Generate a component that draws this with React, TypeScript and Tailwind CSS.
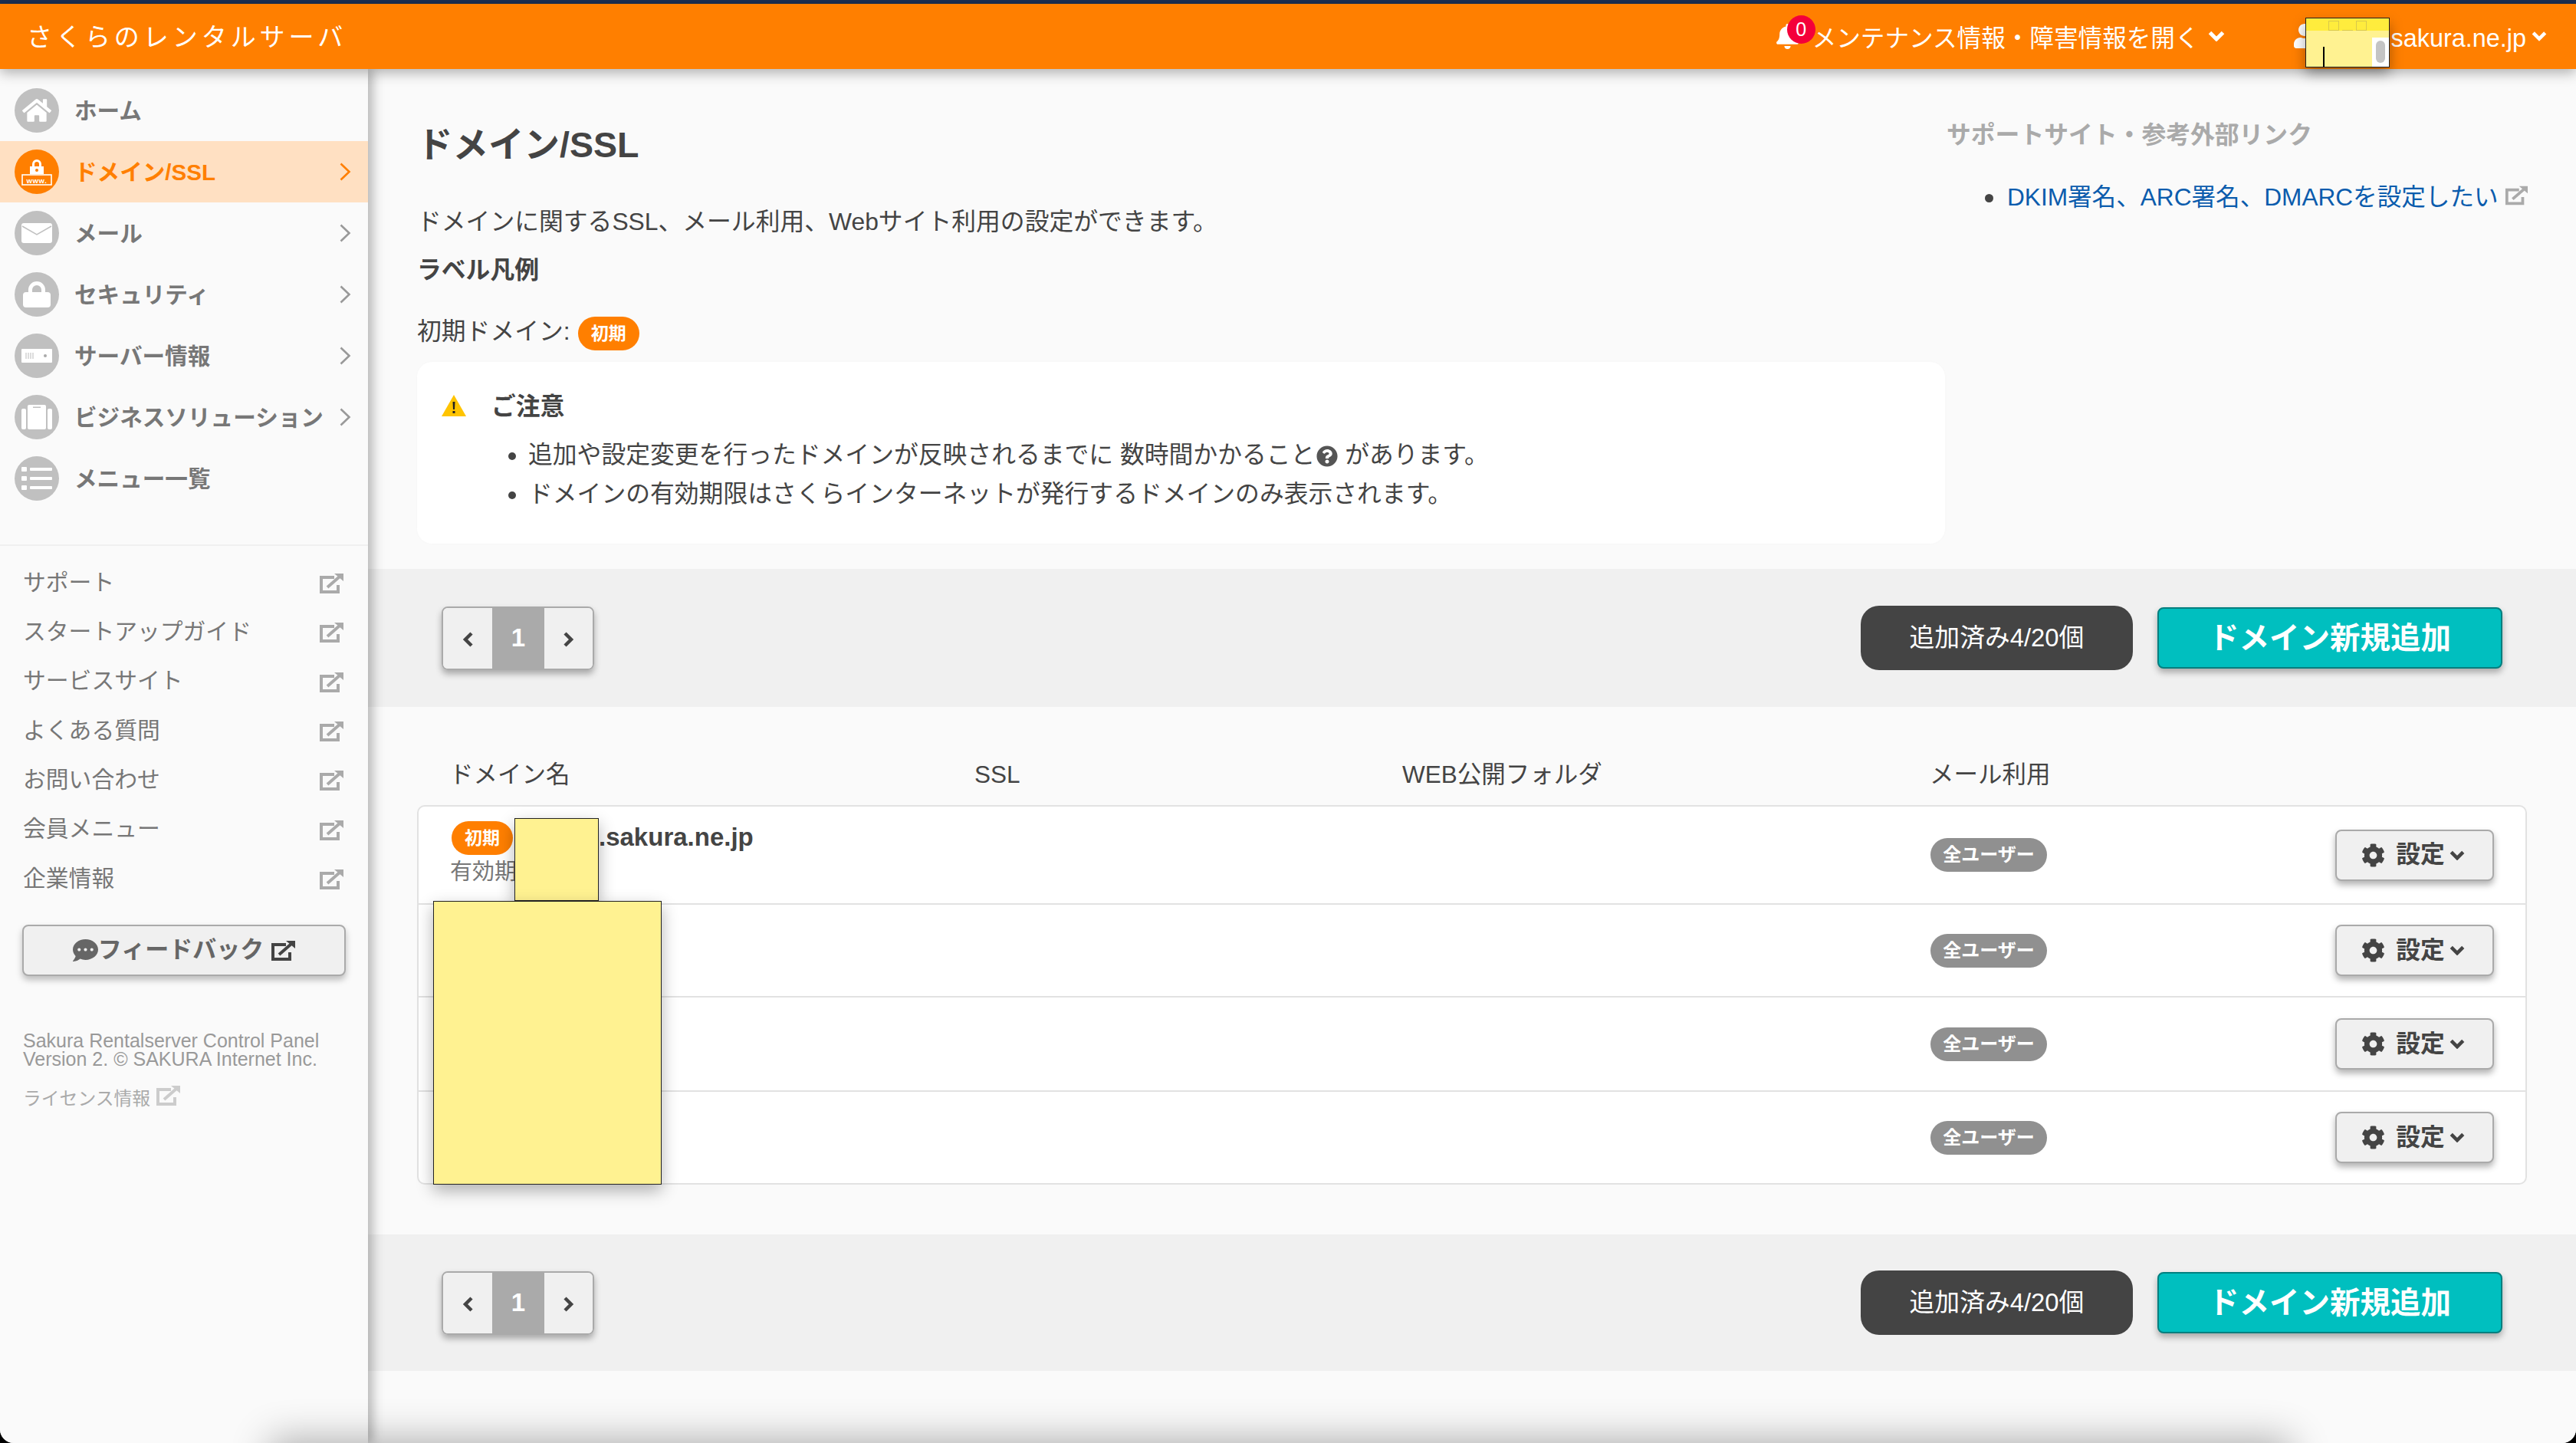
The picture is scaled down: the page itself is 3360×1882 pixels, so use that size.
import { FaBell, FaCog, FaCommentDots, FaHome, FaQuestionCircle, FaUser } from "react-icons/fa";
import type { ReactNode } from "react";

function ExternalIcon({ className }: { className: string }) {
  return (
    <svg viewBox="0 0 32 28" className={className} fill="none" stroke="currentColor">
      <path d="M20 6H3v19h22v-9" strokeWidth="4" />
      <path d="M11 19 27 5" strokeWidth="4" />
      <path d="M20 1h12v10z" fill="currentColor" stroke="none" />
    </svg>
  );
}

function ChevronDown({ className }: { className: string }) {
  return (
    <svg viewBox="0 0 22 14" className={className} fill="none" stroke="currentColor" strokeWidth="5">
      <path d="M2.5 2.5 11 11l8.5-8.5" />
    </svg>
  );
}

function ChevronThin({ className }: { className: string }) {
  return (
    <svg viewBox="0 0 15 24" className={className} fill="none" stroke="currentColor" strokeWidth="2.6">
      <path d="m1.5 1.5 11 10.5-11 10.5" />
    </svg>
  );
}

function DomainIcon() {
  return (
    <svg viewBox="0 0 40 36" className="w-[40px] h-[36px]" fill="white">
      <path d="M14 12V8a6 6 0 0 1 12 0v4h-3V8a3 3 0 0 0-6 0v4z" />
      <rect x="11" y="11" width="18" height="10" />
      <circle cx="20" cy="16" r="2" fill="#ff7f00" />
      <rect x="1" y="22" width="38" height="13" fill="none" stroke="white" strokeWidth="1.6" />
      <text x="20" y="32.5" textAnchor="middle" fontSize="9.5" fontWeight="700" letterSpacing="0.6" fontFamily="Liberation Sans">www.</text>
    </svg>
  );
}

function MailIcon() {
  return (
    <svg viewBox="0 0 40 26" className="w-[40px] h-[26px]">
      <rect width="40" height="26" rx="3" fill="white" />
      <path d="M1 4 20 15 39 4" fill="none" stroke="#c0c0c0" strokeWidth="1.5" />
    </svg>
  );
}

function LockIcon() {
  return (
    <svg viewBox="0 0 36 34" className="w-[36px] h-[34px]" fill="white">
      <path d="M7 17V11a11 11 0 0 1 22 0v6h-5v-6a6 6 0 0 0-12 0v6z" />
      <rect y="14" width="36" height="20" rx="4" />
    </svg>
  );
}

function ServerIcon() {
  return (
    <svg viewBox="0 0 40 18" className="w-[40px] h-[18px]">
      <rect width="40" height="18" rx="1" fill="white" />
      <path d="M6 5v8M9 5v8M12 5v8M15 5v8" stroke="#bbb" strokeWidth="1" />
      <circle cx="31" cy="9" r="2" fill="#aaa" />
    </svg>
  );
}

function CaseIcon() {
  return (
    <svg viewBox="0 0 40 32" className="w-[40px] h-[32px]" fill="white">
      <rect y="5" width="6" height="27" rx="2" />
      <rect x="8" y="0" width="24" height="32" rx="2" />
      <rect x="34" y="5" width="6" height="27" rx="2" />
      <rect x="15" y="2.5" width="10" height="1.5" fill="#c0c0c0" />
    </svg>
  );
}

function ListIcon() {
  return (
    <svg viewBox="0 0 40 30" className="w-[40px] h-[30px]" fill="white">
      <rect y="0" width="7" height="6" rx="1" />
      <rect y="12" width="7" height="6" rx="1" />
      <rect y="24" width="7" height="6" rx="1" />
      <rect x="11" y="1" width="29" height="4" rx="1" />
      <rect x="11" y="13" width="29" height="4" rx="1" />
      <rect x="11" y="25" width="29" height="4" rx="1" />
    </svg>
  );
}

const navItems: { label: string; icon: ReactNode; arrow: boolean; active?: boolean }[] = [
  { label: "ホーム", icon: <FaHome className="size-[38px] text-white" />, arrow: false },
  { label: "ドメイン/SSL", icon: <DomainIcon />, arrow: true, active: true },
  { label: "メール", icon: <MailIcon />, arrow: true },
  { label: "セキュリティ", icon: <LockIcon />, arrow: true },
  { label: "サーバー情報", icon: <ServerIcon />, arrow: true },
  { label: "ビジネスソリューション", icon: <CaseIcon />, arrow: true },
  { label: "メニュー一覧", icon: <ListIcon />, arrow: false },
];

const linkItems = ["サポート", "スタートアップガイド", "サービスサイト", "よくある質問", "お問い合わせ", "会員メニュー", "企業情報"];

function Sidebar() {
  return (
    <aside className="relative z-10 w-[480px] shrink-0 bg-[#fafafa] shadow-[6px_0_14px_rgba(0,0,0,0.28)] pt-[14px]">
      {navItems.map((item) => (
        <div key={item.label} className={`flex h-[80px] items-center pl-[19px] pr-[22px] ${item.active ? "bg-[#ffe0c2]" : ""}`}>
          <div className={`flex size-[58px] shrink-0 items-center justify-center rounded-full ${item.active ? "bg-[#ff7f00]" : "bg-[#c0c0c0]"}`}>{item.icon}</div>
          <span className={`ml-[20px] mt-[3px] flex-1 whitespace-nowrap text-[29.6px] font-bold ${item.active ? "text-[#ff7f00]" : "text-[#777]"}`}>{item.label}</span>
          {item.arrow && <ChevronThin className={`h-[24px] w-[15px] ${item.active ? "text-[#ff7f00]" : "text-[#999]"}`} />}
        </div>
      ))}
      <div className="mt-[46px] border-t-2 border-[#f0f0f0] pt-[17px]">
        {linkItems.map((label) => (
          <div key={label} className="flex h-[64.3px] items-center pl-[30px] pr-[32px] text-[29.8px] text-[#777]">
            <span className="-mt-[2px] flex-1">{label}</span>
            <ExternalIcon className="h-[28px] w-[32px] text-[#aaa]" />
          </div>
        ))}
      </div>
      <button type="button" className="ml-[29px] mt-[27px] flex h-[67px] w-[422px] items-center justify-center rounded-[8px] border-2 border-[#aaa] bg-[#f0f0f0] text-[31px] font-bold text-[#666] shadow-[0_5px_8px_rgba(0,0,0,0.25)]">
        <FaCommentDots className="size-[33px]" />
        <span>フィードバック</span>
        <ExternalIcon className="ml-[9px] h-[28px] w-[32px] text-[#444]" />
      </button>
      <p className="ml-[30px] mt-[72px] text-[25px] leading-[24px] text-[#999]">
        Sakura Rentalserver Control Panel
        <br />
        Version 2. © SAKURA Internet Inc.
      </p>
      <div className="ml-[30px] mt-[22px] flex items-center text-[23.8px] text-[#aaa]">
        <span>ライセンス情報</span>
        <ExternalIcon className="ml-[7px] -mt-[8px] h-[28px] w-[32px] text-[#ccc]" />
      </div>
    </aside>
  );
}

function Toolbar({ height }: { height: string }) {
  return (
    <div className={`flex items-center justify-between bg-[#f0f0f0] pl-[96px] pr-[96px] ${height}`}>
      <div className="flex h-[83px] w-[199px] overflow-hidden rounded-[8px] border-2 border-[#aaa] shadow-[0_5px_8px_rgba(0,0,0,0.3)]">
        <div className="flex w-[64px] items-center justify-center bg-[#f0f0f0] text-[#444]">
          <svg viewBox="0 0 14 20" className="mt-[3px] h-[20px] w-[15px]" fill="none" stroke="currentColor" strokeWidth="4.5"><path d="M11.5 2 3.5 10l8 8" /></svg>
        </div>
        <div className="flex w-[68px] items-center justify-center bg-[#aaa] text-[33px] font-bold text-white">1</div>
        <div className="flex flex-1 items-center justify-center bg-[#f0f0f0] text-[#444]">
          <svg viewBox="0 0 14 20" className="mt-[3px] h-[20px] w-[15px]" fill="none" stroke="currentColor" strokeWidth="4.5"><path d="m2.5 2 8 8-8 8" /></svg>
        </div>
      </div>
      <div className="flex items-center">
        <div className="flex h-[84px] w-[355px] items-center justify-center rounded-[24px] bg-[#444] text-[32.8px] text-white">追加済み4/20個</div>
        <button type="button" className="ml-[32px] h-[80px] w-[450px] rounded-[8px] border-2 border-[#007f7f] bg-[#00bfbf] pt-[2px] text-[39.5px] font-bold text-white shadow-[0_5px_8px_rgba(0,0,0,0.3)]">ドメイン新規追加</button>
      </div>
    </div>
  );
}

function Badge({ children, bg, width }: { children: string; bg: string; width: string }) {
  return <span className={`inline-flex h-[44px] items-center justify-center rounded-full text-[23px] font-bold text-white ${bg} ${width}`}>{children}</span>;
}

function TableRow({ height, first, last }: { height: string; first?: boolean; last?: boolean }) {
  return (
    <div className={`grid grid-cols-[685px_558px_688px_1fr] items-center px-[41px] ${height} ${last ? "" : "border-b-2 border-[#e2e2e2]"}`}>
      <div>
        {first && (
          <>
            <div className="-mt-[2px] flex items-center">
              <Badge bg="bg-[#ff7f00]" width="w-[80px] ml-[2px]">初期</Badge>
              <span className="ml-[112px] -mt-[2px] text-[33px] font-bold leading-[40px] text-[#444]">.sakura.ne.jp</span>
            </div>
            <div className="mt-[2px] text-[29px] leading-[40px] text-[#777]">有効期</div>
          </>
        )}
      </div>
      <div />
      <div />
      <div className="flex items-center justify-between">
        <Badge bg="bg-[#909090]" width="w-[152px] text-[24px]">全ユーザー</Badge>
        <button type="button" className="flex h-[67px] w-[207px] items-center justify-center rounded-[8px] border-2 border-[#aaa] bg-[#f0f0f0] pr-[4px] font-bold text-[#444] shadow-[0_5px_8px_rgba(0,0,0,0.3)]">
          <FaCog className="size-[31px]" />
          <span className="ml-[14px]">設定</span>
          <ChevronDown className="ml-[6px] h-[13px] w-[20px]" />
        </button>
      </div>
    </div>
  );
}

function Main() {
  return (
    <main className="min-w-0 flex-1 bg-[#fafafa]">
      <div className="flex pl-[64px]">
        <div className="w-[1993px] pt-[69px]">
          <h1 className="text-[46.5px] font-bold leading-[60px] text-[#444]">ドメイン/SSL</h1>
          <p className="mt-[48px] leading-[44px]">ドメインに関するSSL、メール利用、Webサイト利用の設定ができます。</p>
          <p className="mt-[19px] font-bold leading-[44px]">ラベル凡例</p>
          <div className="mt-[39px] flex h-[44px] items-center">
            <span className="-mt-[4px]">初期ドメイン:</span>
            <Badge bg="bg-[#ff7f00] ml-[10px]" width="w-[80px]">初期</Badge>
          </div>
          <div className="mb-[33px] mt-[15px] h-[237px] rounded-[20px] bg-white pt-[35px] shadow-[0_0_4px_rgba(0,0,0,0.02)]">
            <div className="flex h-[44px] items-center pl-[32px]">
              <svg viewBox="0 0 32 28" className="h-[28px] w-[32px]">
                <path d="M16 0 32 28H0z" fill="#ffc400" />
                <path d="M14.5 9h3l-.5 10h-2zM14.5 21h3v3h-3z" fill="#222" />
              </svg>
              <span className="ml-[33px] mt-[3px] font-bold">ご注意</span>
            </div>
            <ul className="mt-[17px] list-disc pl-[145px] leading-[51px] marker:text-[#444]">
              <li>
                追加や設定変更を行ったドメインが反映されるまでに 数時間かかること
                <FaQuestionCircle className="ml-[2px] inline size-[28px] align-[-5px] text-[#555]" /> があります。
              </li>
              <li>ドメインの有効期限はさくらインターネットが発行するドメインのみ表示されます。</li>
            </ul>
          </div>
        </div>
        <div className="ml-[2px] flex-1 pt-[64px]">
          <p className="font-bold leading-[44px] text-[#aaa]">サポートサイト・参考外部リンク</p>
          <div className="mt-[38px] flex h-[44px] items-center pl-[50px]">
            <span className="size-[11px] rounded-full bg-[#444]" />
            <span className="ml-[18px] whitespace-nowrap text-[31.6px] text-[#0b5cad]">DKIM署名、ARC署名、DMARCを設定したい</span>
            <ExternalIcon className="ml-[8px] -mt-[6px] h-[28px] w-[30px] text-[#aaa]" />
          </div>
        </div>
      </div>
      <Toolbar height="h-[180px]" />
      <div className="pl-[64px] pt-[66px]">
        <div className="grid w-[2752px] grid-cols-[685px_558px_688px_1fr] pl-[42px] text-[31.5px] leading-[44px]">
          <span>ドメイン名</span>
          <span>SSL</span>
          <span>WEB公開フォルダ</span>
          <span>メール利用</span>
        </div>
        <div className="mt-[18px] h-[495px] w-[2752px] rounded-[10px] border-2 border-[#e2e2e2] bg-white">
          <TableRow height="h-[128px]" first />
          <TableRow height="h-[121px]" />
          <TableRow height="h-[123px]" />
          <TableRow height="h-[119px]" last />
        </div>
      </div>
      <div className="mt-[65px]">
        <Toolbar height="h-[178px]" />
      </div>
    </main>
  );
}

export default function App() {
  return (
    <div className="h-[1882px] w-[3360px] overflow-hidden bg-black">
      <div className="relative flex h-full flex-col overflow-hidden rounded-b-[18px] bg-[#fafafa] text-[31.8px] text-[#444] [font-family:'Liberation_Sans','Noto_Sans_CJK_JP',sans-serif]">
        <div className="h-[5px] bg-[#1b2f52]" />
        <header className="relative z-20 flex h-[85px] shrink-0 items-center bg-[#ff7f00] pl-[35px] pr-[38px] text-white shadow-[0_5px_16px_rgba(0,0,0,0.3)]">
          <span className="mt-[2px] text-[33px] tracking-[0.15em]">さくらのレンタルサーバ</span>
          <div className="ml-auto flex items-center">
            <div className="relative mr-[16px]">
              <FaBell className="size-[33px]" />
              <span className="absolute -top-[11px] left-[16px] flex size-[37px] items-center justify-center rounded-full bg-[#f4003a] text-[25px]">0</span>
            </div>
            <span className="mt-[6px] whitespace-nowrap text-[31.6px]">メンテナンス情報・障害情報を開く</span>
            <ChevronDown className="ml-[11px] h-[14px] w-[22px]" />
            <FaUser className="ml-[88px] size-[32px]" />
            <span className="ml-[97px] mt-[6px] text-[32.4px]">sakura.ne.jp</span>
            <ChevronDown className="ml-[7px] h-[14px] w-[20px]" />
          </div>
        </header>
        <div className="flex min-h-0 flex-1">
          <Sidebar />
          <Main />
        </div>
        {/* masked parts of the capture */}
        <div className="absolute left-[3007px] top-[23px] z-30 h-[65px] w-[110px] overflow-hidden border border-[#222] bg-[#fff291] shadow-[0_8px_16px_rgba(0,0,0,0.35)]">
          <div className="flex h-[16px] justify-center gap-[4px] bg-[#ffec3d] pt-[3px]">
            <span className="h-[13px] w-[14px] border border-[#d9c84a]" />
            <span className="h-[13px] w-[14px] border-b border-[#d9c84a]" />
            <span className="h-[13px] w-[14px] border border-[#d9c84a]" />
          </div>
          <div className="absolute left-[22px] top-[37px] h-[28px] w-[2px] bg-black" />
          <div className="absolute right-0 top-[25px] flex h-[40px] w-[22px] justify-center bg-white pt-[4px]">
            <span className="h-[29px] w-[12px] rounded-full bg-[#c4c4c4]" />
          </div>
        </div>
        <div className="absolute left-[671px] top-[1067px] z-10 h-[108px] w-[110px] border border-[#222] bg-[#fff291] shadow-[0_8px_20px_rgba(0,0,0,0.3)]" />
        <div className="absolute left-[565px] top-[1175px] z-10 h-[370px] w-[298px] border border-[#222] bg-[#fff291] shadow-[0_8px_20px_rgba(0,0,0,0.3)]" />
        {/* shadow coming up from the bottom edge */}
        <div className="absolute left-[380px] top-[1905px] z-10 h-[20px] w-[2580px] bg-black shadow-[0_0_50px_28px_rgba(0,0,0,0.3)]" />
      </div>
    </div>
  );
}
